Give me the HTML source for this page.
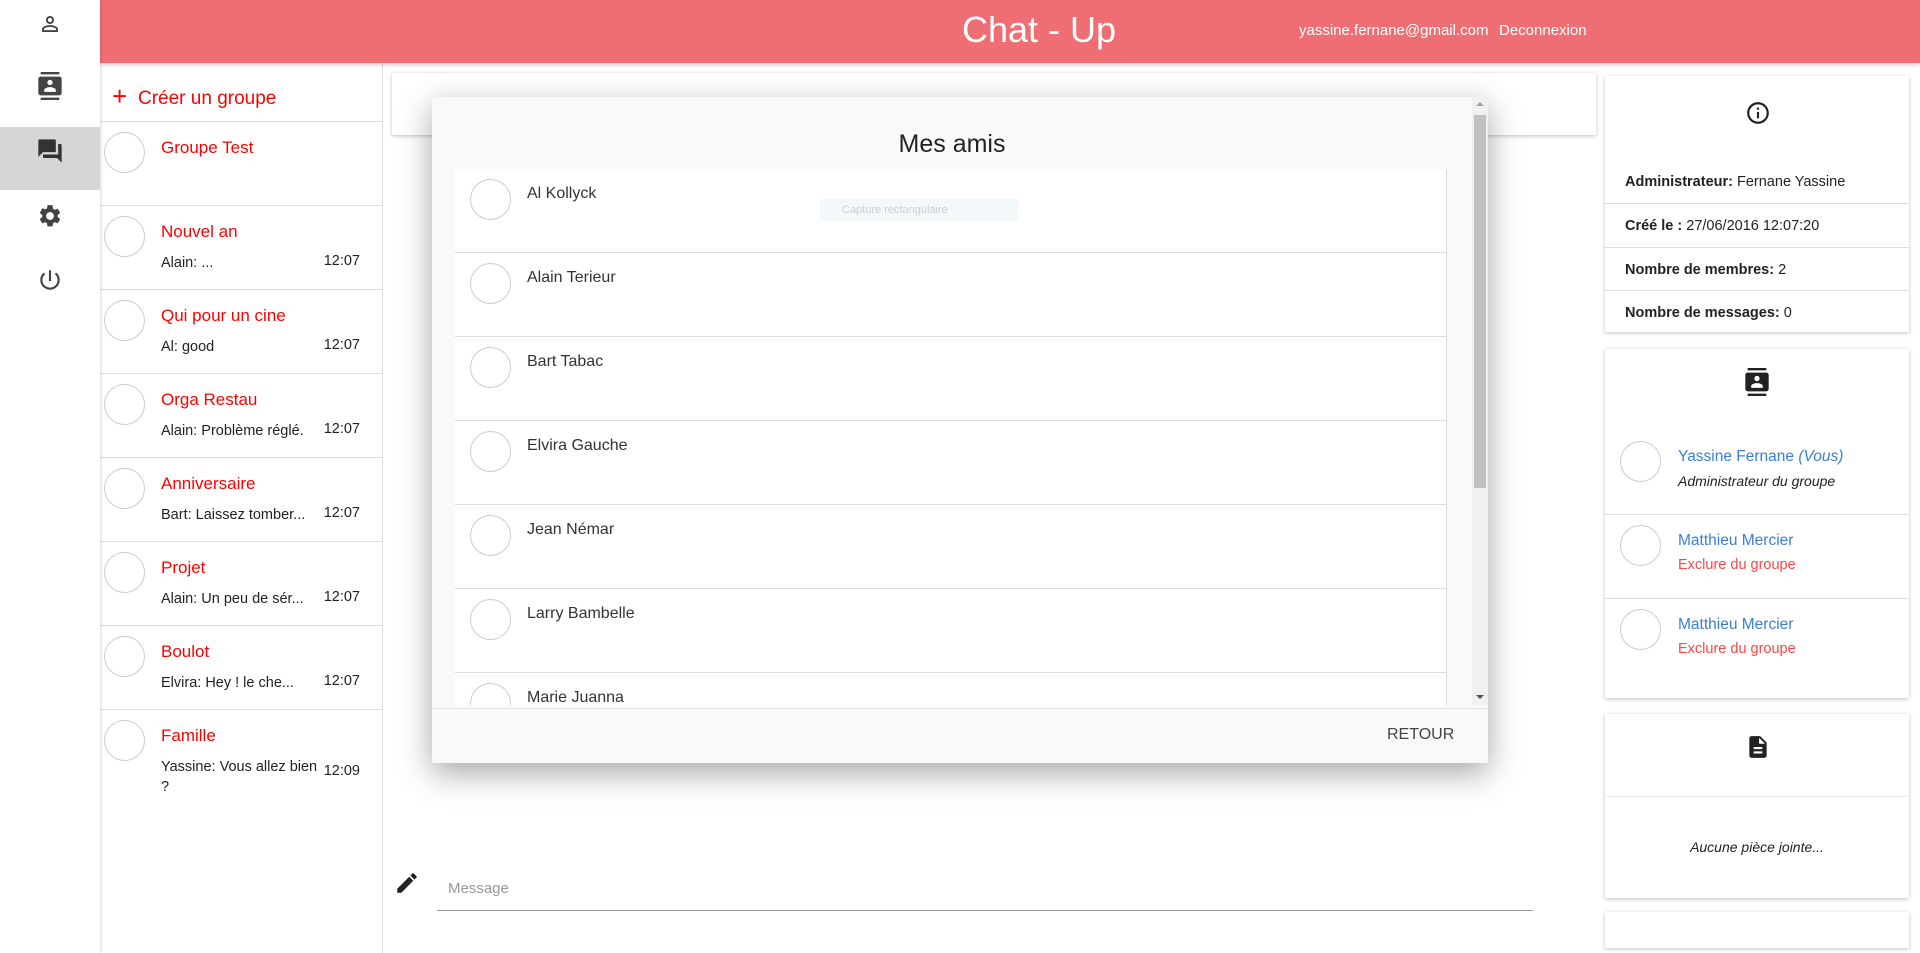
<!DOCTYPE html>
<html><head><meta charset="utf-8"><style>
*{box-sizing:border-box;margin:0;padding:0}
body{width:1920px;height:953px;overflow:hidden;background:#fff;font-family:"Liberation Sans",sans-serif;position:relative}
.abs{position:absolute}
.side{left:0;top:0;width:100px;height:953px;background:#fff;box-shadow:1px 0 3px rgba(0,0,0,.15);z-index:3}
.side .it{position:absolute;left:0;width:100px;height:64px;display:flex;align-items:center;justify-content:center}
.hdr{left:100px;top:0;width:1820px;height:63px;background:#ef6e73;box-shadow:0 2px 4px rgba(0,0,0,.2);z-index:2;color:#fff}
.list{left:100px;top:63px;width:283px;height:890px;border-right:1px solid #ddd}
.row{position:absolute;left:0;width:282px;height:84px;border-top:1px solid #ddd}
.av{position:absolute;width:41px;height:41px;border:1px solid #ccc;border-radius:50%;background:#fff}
.gname{position:absolute;left:61px;top:16px;font-size:17px;color:#f00}
.gsub{position:absolute;left:61px;top:47px;font-size:14.5px;color:#222;width:168px;line-height:20px}
.gt{position:absolute;right:22px;top:47px;font-size:14.5px;color:#222}
.card{background:#fff;box-shadow:0 1px 4px rgba(0,0,0,.25)}
.modal{left:432px;top:97px;width:1056px;height:666px;background:#f9f9f9;box-shadow:0 10px 30px rgba(0,0,0,.35);z-index:5}
.fr{position:absolute;left:0;width:991px;height:84px;border-bottom:1px solid #ddd;background:#fff}
.fr .av{left:15px;top:10px}
.fr span{position:absolute;left:72px;top:16px;font-size:16px;color:#333}
.rc{left:1605px;width:304px}
.ir{position:absolute;left:0;width:304px;border-top:1px solid #ddd;font-size:14.5px;color:#222;padding-left:20px}
</style></head><body>
<div class="abs side">
 <div class="it" style="top:-8px"><svg width="24" height="24" viewBox="0 0 24 24"><path d="M12 5.9a2.1 2.1 0 1 1 0 4.2 2.1 2.1 0 0 1 0-4.2m0 9c2.970 0 6.1 1.46 6.1 2.1v1.1H5.9V17c0-.64 3.13-2.1 6.1-2.1M12 4C9.79 4 8 5.79 8 8s1.790 4 4 4 4-1.79 4-4-1.79-4-4-4zm0 9c-2.67 0-8 1.34-8 4v3h16v-3c0-2.66-5.33-4-8-4z" fill="#444"/></svg></div>
 <div class="it" style="top:54px"><svg width="28" height="28" viewBox="0 0 24 24"><path d="M20 0H4v2h16V0zM4 24h16v-2H4v2zM20 4H4c-1.1 0-2 .9-2 2v12c0 1.1.9 2 2 2h16c1.1 0 2-.9 2-2V6c0-1.1-.9-2-2-2zm-8 2.75c1.24 0 2.25 1.01 2.25 2.25s-1.01 2.25-2.25 2.25S9.75 10.24 9.75 9 10.76 6.75 12 6.75zM17 17H7v-1.5c0-1.67 3.33-2.5 5-2.5s5 .83 5 2.5V17z" fill="#444"/></svg></div>
 <div class="abs" style="top:127px;left:0;width:100px;height:63px;background:#d6d6d6"></div>
 <div class="it" style="top:119px"><svg width="28" height="28" viewBox="0 0 24 24"><path d="M21 6h-2v9H6v2c0 .55.45 1 1 1h11l4 4V7c0-.55-.45-1-1-1zm-4 6V3c0-.55-.45-1-1-1H3c-.55 0-1 .45-1 1v14l4-4h10c.55 0 1-.45 1-1z" fill="#333"/></svg></div>
 <div class="it" style="top:184px"><svg width="26" height="26" viewBox="0 0 24 24"><path d="M19.14 12.94c.04-.3.06-.61.06-.94s-.02-.64-.07-.94l2.03-1.58a.49.49 0 0 0 .12-.61l-1.92-3.32a.49.49 0 0 0-.59-.22l-2.39.96c-.5-.38-1.03-.7-1.62-.94l-.36-2.54A.48.48 0 0 0 13.92 2h-3.84c-.24 0-.43.17-.47.41l-.36 2.54c-.59.24-1.13.57-1.620.94l-2.39-.96a.48.48 0 0 0-.59.22L2.74 8.87c-.12.21-.08.47.12.61l2.03 1.58c-.05.3-.09.63-.09.94s.02.64.07.94l-2.03 1.58a.49.49 0 0 0-.12.61l1.92 3.32c.12.22.37.29.59.22l2.39-.96c.5.38 1.03.7 1.62.94l.36 2.54c.05.24.24.41.48.41h3.84c.24 0 .44-.17.47-.41l.36-2.54c.59-.24 1.13-.56 1.62-.94l2.39.96c.22.08.47 0 .59-.22l1.92-3.32c.12-.22.07-.47-.12-.61l-2.01-1.58zM12 15.6A3.6 3.6 0 1 1 12 8.4a3.6 3.6 0 0 1 0 7.2z" fill="#444"/></svg></div>
 <div class="it" style="top:248px"><svg width="26" height="26" viewBox="0 0 24 24"><path d="M13 3h-2v10h2V3zm4.83 2.17l-1.42 1.42A6.92 6.92 0 0 1 19 12c0 3.87-3.13 7-7 7s-7-3.13-7-7c0-2.17.99-4.1 2.58-5.42L6.17 5.17A8.930 8.93 0 0 0 3 12a9 9 0 0 0 18 0c0-2.74-1.23-5.18-3.17-6.83z" fill="#444"/></svg></div>
</div>
<div class="abs hdr">
 <div class="abs" style="left:862px;top:9px;font-size:36px">Chat - Up</div>
 <div class="abs" style="left:1199px;top:22px;font-size:15px">yassine.fernane@gmail.com</div>
 <div class="abs" style="left:1399px;top:22px;font-size:15px">Deconnexion</div>
</div>
<div class="abs list">
 <div class="abs" style="left:12px;top:18px;color:#f00;font-size:26px;font-weight:300">+</div>
 <div class="abs" style="left:38px;top:25px;color:#f00;font-size:19px">Créer un groupe</div>
 <div class="row" style="top:58px"><div class="av" style="left:4px;top:10px"></div><div class="gname">Groupe Test</div></div>
 <div class="row" style="top:142px"><div class="av" style="left:4px;top:10px"></div><div class="gname">Nouvel an</div><div class="gsub">Alain: ...</div><div class="gt">12:07</div></div>
 <div class="row" style="top:226px"><div class="av" style="left:4px;top:10px"></div><div class="gname">Qui pour un cine</div><div class="gsub">Al: good</div><div class="gt">12:07</div></div>
 <div class="row" style="top:310px"><div class="av" style="left:4px;top:10px"></div><div class="gname">Orga Restau</div><div class="gsub">Alain: Problème réglé.</div><div class="gt">12:07</div></div>
 <div class="row" style="top:394px"><div class="av" style="left:4px;top:10px"></div><div class="gname">Anniversaire</div><div class="gsub">Bart: Laissez tomber...</div><div class="gt">12:07</div></div>
 <div class="row" style="top:478px"><div class="av" style="left:4px;top:10px"></div><div class="gname">Projet</div><div class="gsub">Alain: Un peu de sér...</div><div class="gt">12:07</div></div>
 <div class="row" style="top:562px"><div class="av" style="left:4px;top:10px"></div><div class="gname">Boulot</div><div class="gsub">Elvira: Hey ! le che...</div><div class="gt">12:07</div></div>
 <div class="row" style="top:646px"><div class="av" style="left:4px;top:10px"></div><div class="gname">Famille</div><div class="gsub">Yassine: Vous allez bien ?</div><div class="gt" style="top:53px">12:09</div></div>
</div>
<div class="abs card" style="left:392px;top:73px;width:1204px;height:62px"></div>
<div class="abs modal">
 <div class="abs" style="left:0;top:33px;width:1040px;text-align:center;font-size:25px;color:#222">Mes amis</div>
 <div class="abs" style="left:23px;top:72px;width:992px;height:536px;overflow:hidden;border-right:1px solid #ddd">
  <div class="fr" style="top:0"><div class="av"></div><span>Al Kollyck</span></div>
  <div class="fr" style="top:84px"><div class="av"></div><span>Alain Terieur</span></div>
  <div class="fr" style="top:168px"><div class="av"></div><span>Bart Tabac</span></div>
  <div class="fr" style="top:252px"><div class="av"></div><span>Elvira Gauche</span></div>
  <div class="fr" style="top:336px"><div class="av"></div><span>Jean Némar</span></div>
  <div class="fr" style="top:420px"><div class="av"></div><span>Larry Bambelle</span></div>
  <div class="fr" style="top:504px"><div class="av"></div><span>Marie Juanna</span></div>
 </div>
 <div class="abs" style="left:388px;top:102px;width:198px;height:22px;background:#f3f8fb;font-size:11px;color:#c8d0d6;padding:5px 0 0 22px">Capture rectangulaire</div>
 <div class="abs" style="left:1040px;top:0;width:16px;height:608px;background:#f1f1f1"></div>
 <div class="abs" style="left:1042px;top:18px;width:12px;height:373px;background:#c1c1c1"></div>
 <div class="abs" style="left:1044px;top:5px;width:0;height:0;border:4px solid transparent;border-bottom-color:#a3a3a3;border-top:0"></div>
 <div class="abs" style="left:1044px;top:598px;width:0;height:0;border:4px solid transparent;border-top-color:#505050;border-bottom:0"></div>
 <div class="abs" style="left:0;top:611px;width:1056px;height:1px;background:#e2e2e2"></div>
 <div class="abs" style="left:955px;top:629px;font-size:16px;color:#444">RETOUR</div>
</div>
<svg class="abs" style="left:394px;top:870px" width="26" height="26" viewBox="0 0 24 24"><path d="M3 17.25V21h3.75L17.81 9.94l-3.75-3.75L3 17.25zM20.71 7.04a1 1 0 0 0 0-1.41l-2.34-2.34a1 1 0 0 0-1.41 0l-1.83 1.83 3.75 3.75 1.83-1.83z" fill="#222"/></svg>
<div class="abs" style="left:448px;top:880px;font-size:15px;color:#999">Message</div>
<div class="abs" style="left:437px;top:910px;width:1096px;height:1px;background:#999"></div>
<div class="abs card rc" style="top:76px;height:256px">
 <svg class="abs" style="left:140px;top:24px" width="26" height="26" viewBox="0 0 24 24"><path d="M11 7h2v2h-2zm0 4h2v6h-2zm1-9C6.48 2 2 6.48 2 12s4.48 10 10 10 10-4.48 10-10S17.52 2 12 2zm0 18c-4.41 0-8-3.59-8-8s3.59-8 8-8 8 3.59 8 8-3.59 8-8 8z" fill="#222"/></svg>
 <div class="abs" style="left:20px;top:98px;font-size:14.5px;color:#222"><b>Administrateur:</b> Fernane Yassine</div>
 <div class="ir" style="top:127px;height:44px;padding-top:14px"><b>Créé le :</b> 27/06/2016 12:07:20</div>
 <div class="ir" style="top:171px;height:43px;padding-top:14px"><b>Nombre de membres:</b> 2</div>
 <div class="ir" style="top:214px;height:42px;padding-top:14px"><b>Nombre de messages:</b> 0</div>
</div>
<div class="abs card rc" style="top:349px;height:349px">
 <svg class="abs" style="left:138px;top:19px" width="28" height="28" viewBox="0 0 24 24"><path d="M20 0H4v2h16V0zM4 24h16v-2H4v2zM20 4H4c-1.1 0-2 .9-2 2v12c0 1.1.9 2 2 2h16c1.1 0 2-.9 2-2V6c0-1.1-.9-2-2-2zm-8 2.75c1.24 0 2.25 1.01 2.25 2.25s-1.01 2.25-2.25 2.25S9.75 10.24 9.75 9 10.76 6.75 12 6.75zM17 17H7v-1.5c0-1.67 3.33-2.5 5-2.5s5 .83 5 2.5V17z" fill="#222"/></svg>
 <div class="av" style="left:15px;top:92px"></div>
 <div class="abs" style="left:73px;top:99px;font-size:15.5px;color:#3b7dd8">Yassine Fernane <i>(Vous)</i></div>
 <div class="abs" style="left:73px;top:124px;font-size:14px;color:#222;font-style:italic">Administrateur du groupe</div>
 <div class="ir" style="top:165px;height:1px"></div>
 <div class="av" style="left:15px;top:176px"></div>
 <div class="abs" style="left:73px;top:183px;font-size:15.5px;color:#3b7dd8">Matthieu Mercier</div>
 <div class="abs" style="left:73px;top:208px;font-size:14.5px;color:#f44">Exclure du groupe</div>
 <div class="ir" style="top:249px;height:1px"></div>
 <div class="av" style="left:15px;top:260px"></div>
 <div class="abs" style="left:73px;top:267px;font-size:15.5px;color:#3b7dd8">Matthieu Mercier</div>
 <div class="abs" style="left:73px;top:292px;font-size:14.5px;color:#f44">Exclure du groupe</div>
</div>
<div class="abs card rc" style="top:714px;height:184px">
 <svg class="abs" style="left:140px;top:20px" width="26" height="26" viewBox="0 0 24 24"><path d="M14 2H6c-1.1 0-2 .9-2 2v16c0 1.1.9 2 2 2h12c1.1 0 2-.9 2-2V8l-6-6zm2 16H8v-2h8v2zm0-4H8v-2h8v2zm-3-5V3.5L18.5 9H13z" fill="#222"/></svg>
 <div class="abs" style="left:0;top:82px;width:304px;height:1px;background:#eee"></div>
 <div class="abs" style="left:0;top:125px;width:304px;text-align:center;font-size:14px;font-style:italic;color:#222">Aucune pièce jointe...</div>
</div>
<div class="abs card rc" style="top:912px;height:36px"></div>
</body></html>
